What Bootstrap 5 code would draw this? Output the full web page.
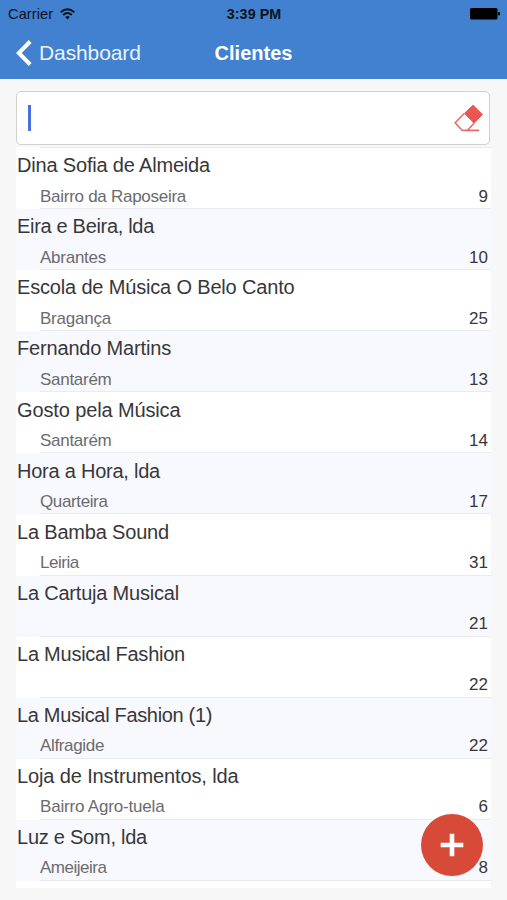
<!DOCTYPE html>
<html lang="pt">
<head>
<meta charset="utf-8">
<meta name="viewport" content="width=device-width, initial-scale=1">
<title>Clientes</title>
<link href="https://cdn.jsdelivr.net/npm/bootstrap@5.3.0/dist/css/bootstrap.min.css" rel="stylesheet">
<style>
body{font-family:"Liberation Sans",Arial,sans-serif;background:#f7f7f7;height:900px;overflow:hidden;color:#37373a}
.app-head{background:#4181cf;height:79px;color:#fff}
.status-row{height:27px;padding:0 7px 0 8px;color:#0c1420;font-size:14.6px;line-height:27px}
.side{flex:1 1 0}
.carrier{letter-spacing:.1px;padding-top:1px}
.wifi{margin-left:7px}
.clock{font-weight:700;font-size:14.3px;letter-spacing:.05px;padding-top:1px}
.title-row{height:51px;padding:0 16px}
.back-link{font-size:21px;line-height:51px;color:#e9f3ff;letter-spacing:-.1px}
.chevron{margin-right:7px}
.page-title{font-size:20px;line-height:51px;font-weight:700;padding-top:1px}
.search-box{height:54px;margin:12px 17px 0 16px;background:#fff;border:1px solid #cdd1cf;border-radius:5px;padding:0 6px 0 11px}
.caret{width:2.5px;height:26px;background:#4a6fe3}
.clients{margin:2px 16px 0;background:#fff;height:741px}
.client{height:61.09px;background:#fff;line-height:24px}
.client:nth-child(even){background:#f8f9fe}
.client-name{font-size:20px;height:30.5px;line-height:24px;padding:5.2px 0 0 1px}
.client-sub{height:30.59px;margin-left:24px;padding:6px 3px 0 0;border-bottom:1px solid #e9ebee;font-size:17px;line-height:24px}
.client-city{color:#6a6b6e}
.rule{height:1px;margin-left:24px;background:#e8eaee}
.add-btn{position:fixed;left:421px;top:814px;width:62px;height:62px;background:#d84a38!important}
</style>
</head>
<body>
<header class="app-head">
  <div class="status-row d-flex align-items-center">
    <div class="side d-flex align-items-center"><span class="carrier">Carrier</span>
      <svg class="wifi" width="15" height="12" viewBox="0 0 15 12" fill="none" stroke="#0c1420" stroke-width="1.9"><path d="M.7 4.3Q7.5-1.6 14.3 4.3M3.1 7Q7.5 3.2 11.9 7"/><path d="M5.2 9Q7.5 7.1 9.8 9L7.5 11.4Z" fill="#0c1420" stroke="none"/></svg>
    </div>
    <div class="clock">3:39 PM</div>
    <div class="side d-flex justify-content-end">
      <svg width="30" height="12" viewBox="0 0 30 12"><rect width="27.5" height="11.5" rx="1.5"/><rect x="28" y="4" width="2" height="3.6" rx="1"/></svg>
    </div>
  </div>
  <div class="title-row d-flex align-items-center">
    <div class="side back-link d-flex align-items-center">
      <svg class="chevron" width="16" height="26" viewBox="0 0 16 26" fill="none" stroke="#fff" stroke-width="4"><path d="M14.2 1.5 2.8 13 14.2 24.5"/></svg><span class="back-text">Dashboard</span>
    </div>
    <div class="page-title">Clientes</div>
    <div class="side"></div>
  </div>
</header>
<div class="search-box d-flex align-items-center justify-content-between">
  <div class="caret"></div>
  <svg width="29" height="28" viewBox="454 104 29 28"><path d="M464.5 113.3 473 105.2 482.4 114.5 474 123.2Z" fill="#ec5650" stroke="#ec5650"/><path d="M464.5 113.3 455.2 122.8 462 130.3H467.5L474 123.2M462 130.4H479" fill="none" stroke="#ee6a66" stroke-width="1.6"/></svg>
</div>
<main class="clients">
  <div class="rule"></div>
  <div id="list"></div>
</main>
<button class="add-btn btn rounded-circle border-0 p-0 d-flex align-items-center justify-content-center" aria-label="Adicionar">
  <svg width="24" height="24" viewBox="0 0 24 24" stroke="#fff" stroke-width="4.6"><path d="M.7 12H23.3M12 .7V23.3"/></svg>
</button>
<script src="https://cdn.jsdelivr.net/npm/bootstrap@5.3.0/dist/js/bootstrap.bundle.min.js"></script>
<script>
// name, city, count, name width, city width
const clients=[["Dina Sofia de Almeida","Bairro da Raposeira",9,193,146],["Eira e Beira, lda","Abrantes",10,137,66],["Escola de Música O Belo Canto","Bragança",25,277.5,71],["Fernando Martins","Santarém",13,154,71.5],["Gosto pela Música","Santarém",14,163.5,71.5],["Hora a Hora, lda","Quarteira",17,143,67.5],["La Bamba Sound","Leiria",31,152,38.8],["La Cartuja Musical","",21,162,0],["La Musical Fashion","",22,168,0],["La Musical Fashion (1)","Alfragide",22,195,64],["Loja de Instrumentos, lda","Bairro Agro-tuela",6,221.5,124.5],["Luz e Som, lda","Ameijeira",8,130,66.5]];
document.getElementById("list").innerHTML=clients.map(([n,c,q,nw,cw])=>`<div class="client"><div class="client-name"><span data-w="${nw}">${n}</span></div><div class="client-sub d-flex justify-content-between"><span class="client-city" data-w="${cw}">${c}</span><span>${q}</span></div></div>`).join("");
// tighten the tracking so each label takes its set width
document.querySelectorAll("[data-w]").forEach(s=>{const t=s.textContent;if(t)s.style.letterSpacing=((+s.dataset.w-s.getBoundingClientRect().width)/t.length).toFixed(3)+"px";});
</script>
</body>
</html>
